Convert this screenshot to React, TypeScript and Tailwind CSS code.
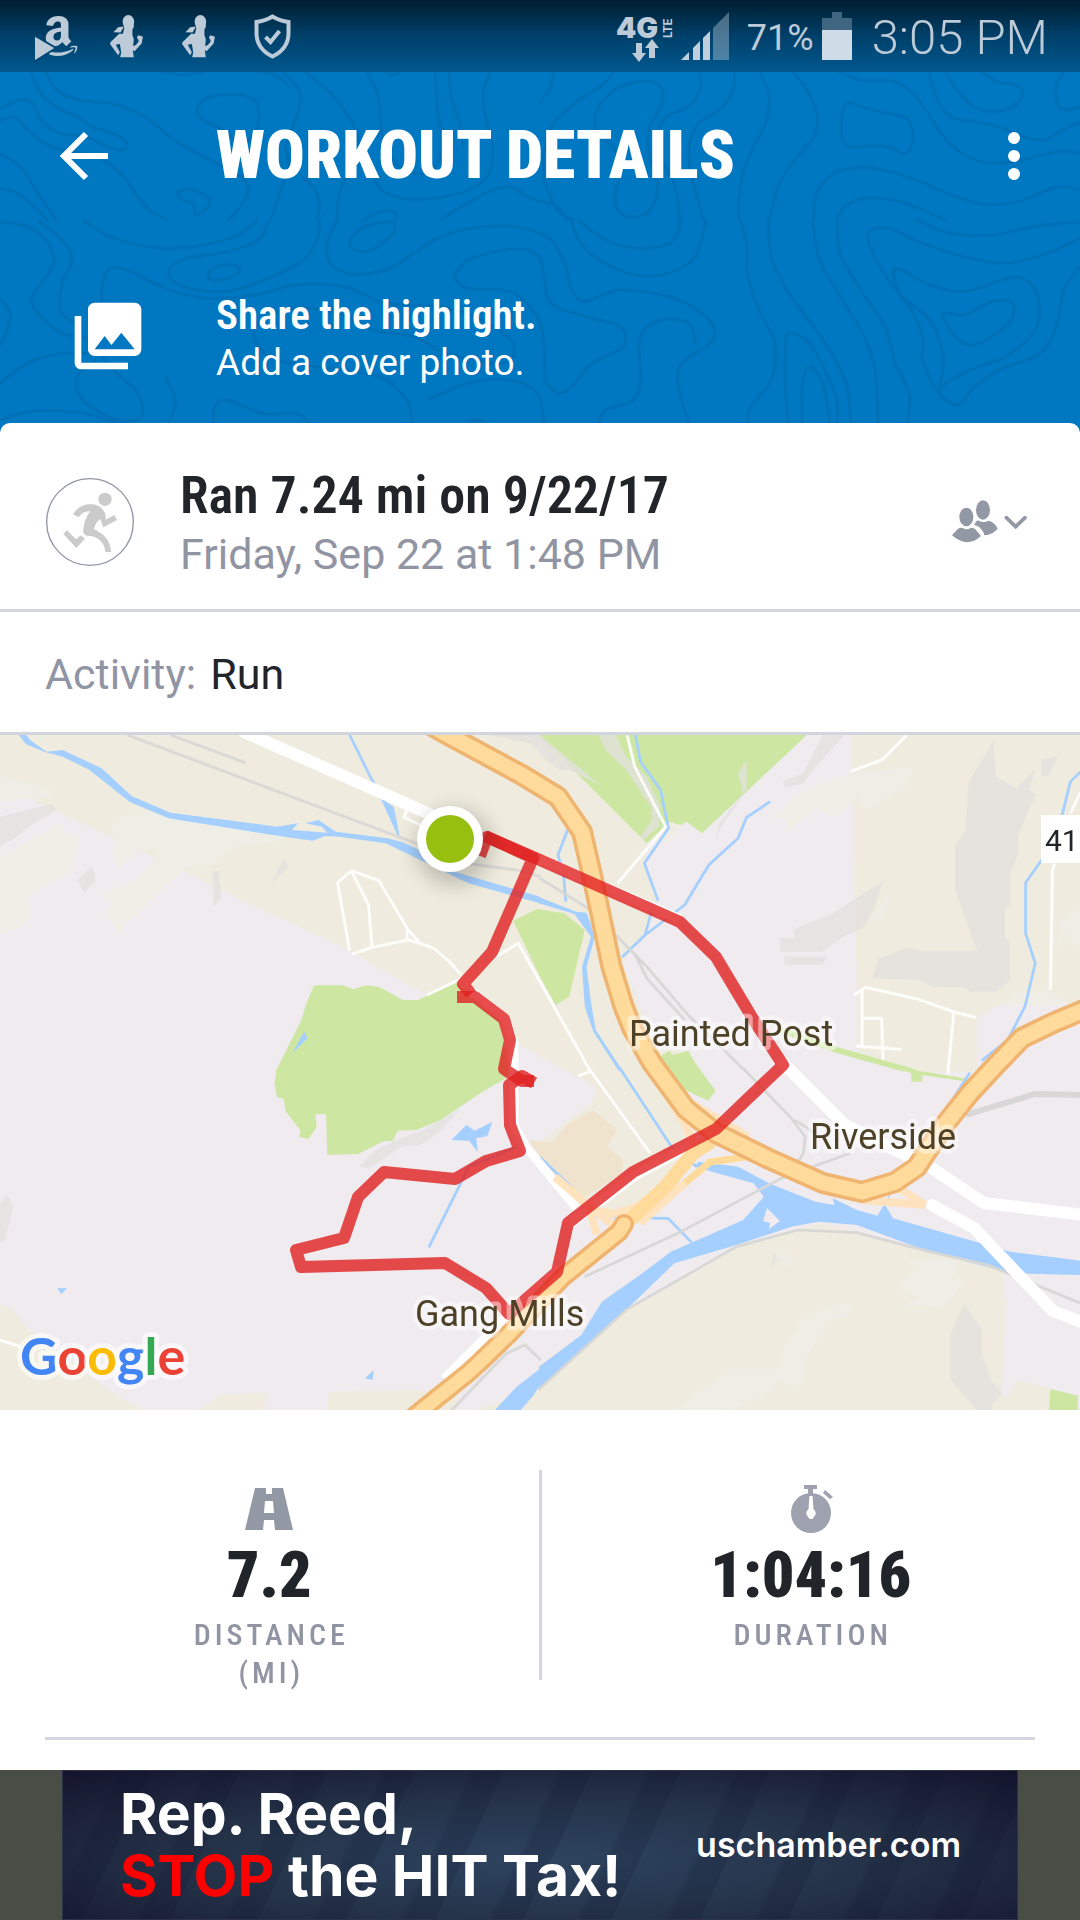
import React from "react";
import { FaAmazon } from "react-icons/fa";
import { MdPhotoLibrary } from "react-icons/md";

/* ---------- helpers ---------- */

// Turns "x,y x,y ..." into a smooth curve through every point.
function smooth(list: string, closed = false): string {
  const p = list
    .trim()
    .split(/\s+/)
    .map((s) => s.split(",").map(Number));
  const n = p.length;
  const at = (i: number) => (closed ? p[(i + n) % n] : p[Math.max(0, Math.min(n - 1, i))]);
  let d = `M${p[0][0]},${p[0][1]}`;
  const last = closed ? n : n - 1;
  for (let i = 0; i < last; i++) {
    const a = at(i - 1);
    const b = at(i);
    const c = at(i + 1);
    const e = at(i + 2);
    d += ` C${b[0] + (c[0] - a[0]) / 6},${b[1] + (c[1] - a[1]) / 6} ${c[0] - (e[0] - b[0]) / 6},${c[1] - (e[1] - b[1]) / 6} ${c[0]},${c[1]}`;
  }
  return closed ? d + "Z" : d;
}

/* ---------- header contour pattern ---------- */

const contourSets: { t: string; open: string[]; closed: string[] }[] = [
  {
    t: "translate(0 0) scale(.3444 .3333)",
    open: [
      "88,215 115,275 170,325 225,350 265,378 330,402 370,430 355,450 310,440 255,412 170,398 120,360 95,310 60,300 0,325",
      "133,215 165,270 230,300 330,312 420,350 520,430 640,495 705,535 722,575 690,630 660,665",
      "0,362 45,352 80,390 130,430 200,455 270,465 350,520 400,590 440,635 490,662",
      "0,462 60,500 110,580 165,662",
      "0,565 50,580 100,620 140,662",
      "820,215 865,265 872,310 850,380 830,440 840,500 815,570 800,620 785,662",
      "745,215 800,225 840,260",
      "885,215 950,270 1000,330 1035,400 1040,470 1000,540 982,600 978,662",
      "1065,215 1095,280 1105,350 1112,420 1150,490 1200,520 1260,505 1285,430 1270,330 1265,215",
      "1305,215 1310,290 1335,370 1345,440",
      "1425,215 1405,270 1410,350 1430,440 1420,520 1370,565 1290,590 1180,597 1110,570 1070,500 1055,420",
      "880,530 915,570 928,620 918,662",
      "1055,662 1100,635 1145,635 1150,662",
      "1275,662 1340,620 1420,575 1480,560 1530,590 1568,605",
      "470,216 530,224 595,216",
      "1120,216 1138,225 1165,216",
    ],
    closed: [
      "572,330 600,295 670,283 735,297 753,350 735,410 700,425 640,385 590,360",
      "518,575 555,568 600,590 608,615 570,645 563,615 530,600",
    ],
  },
  {
    t: "translate(540 0) scale(.3444 .3333)",
    open: [
      "42,215 30,260 0,310",
      "215,215 180,255 100,310 40,370 15,440 10,520 30,590 60,640 100,662",
      "465,215 465,270 430,320 370,350 340,400 350,470 385,540 400,600 405,662",
      "565,215 560,275 520,330 460,370 435,430 435,500 450,570 475,662",
      "640,215 665,290 655,370 620,440 590,520 578,600 578,662",
      "735,215 780,280 806,350 795,410 740,480 695,550 665,662",
      "865,215 930,240 1020,243 1080,275 1130,345 1180,420 1250,475 1330,490 1420,475 1500,455 1568,460",
      "1130,215 1150,290 1190,350 1250,363 1330,380 1400,410 1460,420 1510,395 1568,365",
      "1180,215 1210,270 1260,320 1310,335 1370,322 1402,280 1380,255 1330,245 1280,215",
      "1520,215 1498,260 1505,315 1530,330 1568,320",
      "795,662 800,590 840,530 900,505 980,507 1080,535 1180,580 1290,613 1390,605 1450,580 1510,560 1568,570",
      "860,662 885,620 940,595 1010,597 1100,625 1180,662",
      "0,602 50,620 80,662",
    ],
    closed: [
      "165,330 210,275 270,248 335,248 358,285 340,340 312,400 320,480 342,560 320,630 270,652 225,630 220,570 240,500 210,440 165,390",
      "880,330 895,308 930,320 1000,338 1060,352 1080,385 1078,440 1055,460 1010,440 950,438 895,440 875,400",
    ],
  },
  {
    t: "translate(0 220) scale(.6887 .3333)",
    open: [
      "0,5 40,20 70,70 78,130 60,190 45,240 60,290 90,340 130,360 160,440 200,520 205,590 170,600 120,540 112,470 140,420",
      "55,0 90,60 105,120 90,190 90,280 120,320",
      "120,0 160,50 220,82 280,80 340,50 375,0",
      "390,0 375,60 330,95 270,115 245,150 260,195 310,215 350,205 400,165 440,120 460,60 465,0",
      "490,0 475,70 480,130 510,162 560,150 600,100 640,50 700,20 760,25 800,60 820,130 830,210 850,245 900,210 980,235 1030,300 1035,360 990,430 985,500 1000,610",
      "150,290 148,200 160,145 190,155 240,205 300,235 370,225 430,195 500,200 560,250 640,260 700,300 745,370 730,430 650,400 600,350 540,330 490,280 430,265 380,300 370,360 400,420 460,440 550,470 590,540 598,610",
      "658,170 680,120 740,88 780,105 790,170 800,250 850,290 900,320 905,380 860,430 830,500 810,520 790,480",
      "658,170 680,205 740,215 780,290 790,380 790,480",
      "830,0 840,60 870,120 920,165 970,160 1010,110 1025,0",
      "840,0 880,60 930,85 975,65 990,0",
      "1075,0 1085,80 1085,160 1100,260 1125,370 1120,480 1090,560 1085,610",
      "1115,0 1120,110 1140,200 1170,290 1205,390 1230,500 1235,610",
      "1180,0 1190,120 1220,230 1250,330 1270,440 1275,610",
      "1215,0 1220,100 1250,210 1285,320 1300,430 1320,520 1318,610",
      "1145,610 1140,500 1140,400 1145,340 1175,370 1200,460 1215,540 1215,610",
      "1165,610 1165,500 1175,440 1195,490 1205,610",
      "1330,0 1380,40 1440,45 1500,20 1568,5",
      "1568,55 1520,100 1460,130 1400,110 1340,70 1290,25 1262,35 1265,90 1290,180 1320,260 1340,350 1340,420 1360,510 1390,555 1415,500 1450,450 1510,400 1535,310 1545,210 1568,140",
      "0,490 40,430 90,400 140,400",
      "0,600 50,572 120,580 170,610",
      "0,235 15,280 10,330 0,380",
      "310,610 312,560 330,540 380,580 430,580 450,610",
      "870,610 880,570 920,540 930,480 930,350 960,300 1000,310 1010,370",
      "620,540 680,490 740,480 780,520 790,610",
      "680,605 692,600 705,605",
      "240,470 255,540 245,610",
    ],
    closed: [
      "302,165 315,138 340,135 348,155 325,178 306,178",
      "508,60 530,20 570,5 570,40 540,90 515,90",
      "1297,160 1310,150 1350,195 1400,215 1440,190 1475,170 1500,200 1510,270 1500,340 1460,410 1420,440 1380,480 1365,500 1370,410 1350,300 1310,230",
      "1370,280 1400,285 1440,245 1470,250 1465,310 1415,375 1385,345",
    ],
  },
];

function Contours() {
  return (
    <svg
      className="absolute inset-0 h-full w-full"
      viewBox="0 0 1080 432"
      preserveAspectRatio="xMidYMin slice"
      fill="none"
      stroke="#0070b6"
      strokeWidth="3"
      aria-hidden="true"
    >
      {contourSets.map((s) => (
        <g key={s.t} transform={s.t}>
          {s.open.map((c) => (
            <path key={c} d={smooth(c)} vectorEffect="non-scaling-stroke" />
          ))}
          {s.closed.map((c) => (
            <path key={c} d={smooth(c, true)} vectorEffect="non-scaling-stroke" />
          ))}
        </g>
      ))}
    </svg>
  );
}

/* ---------- status bar ---------- */

function AthleteIcon() {
  return (
    <svg className="h-[44px] w-[34px]" viewBox="319 43 100 130" preserveAspectRatio="none" fill="#bccbd7" aria-hidden="true">
      <ellipse cx="373" cy="65" rx="17" ry="19" />
      <path d="M358 72L361 84L357 102H385V88L389 82V62z" />
      <path d="M329 97L343 82L360 80L357 86L350 98z" />
      <path d="M346 101H384L389 118L387 138L396 134L404 123L398 112L403 106L416 110L412 130L392 152L386 151L389 171H349L352 156L348 132L336 134L348 156L343 165L319 132L321 126z" />
    </svg>
  );
}

function ShieldIcon() {
  return (
    <svg className="h-[45px] w-[37px]" viewBox="0 0 37 45" fill="none" stroke="#bccbd7" strokeWidth="4" aria-hidden="true">
      <path d="M18.500 2.500Q11 7 2.500 8v12Q3 35 18.500 42.500 34 35 34.500 20V8Q26 7 18.500 2.500z" />
      <path d="M11.500 23l5 5 9-11" />
    </svg>
  );
}

function NetworkIcon() {
  return (
    <svg className="h-[60px] w-[66px] overflow-visible" viewBox="612 6 66 60" fill="#bccbd7" aria-hidden="true">
      <text x="617" y="38" fontFamily="Inter, sans-serif" fontWeight="900" fontSize="29">
        4G
      </text>
      <text x="-38" y="673" transform="rotate(-90)" fontFamily="Roboto, sans-serif" fontWeight="700" fontSize="12">
        LTE
      </text>
      <path d="M637 43h6v10h4l-7 9-7-9h4zM650 58v-10h-4l7-9 7 9h-4v10z" />
    </svg>
  );
}

function SignalIcon() {
  return (
    <svg className="h-[48px] w-[48px]" viewBox="681 12 48 48" fill="#bfd0dc" aria-hidden="true">
      <path d="M681 60l8-8v8zM693 48l7-7v19h-7zM703 38l7-7v29h-7z" />
      <path d="M713 28l16-16v48h-16z" fillOpacity=".4" />
    </svg>
  );
}

function BatteryIcon() {
  return (
    <svg className="h-[48px] w-[30px]" viewBox="823 11 30 48" aria-hidden="true">
      <path d="M833 11h10v6h10v12h-30V17h10z" fill="#3f6580" />
      <path d="M823 29h30v30h-30z" fill="#cddce7" />
    </svg>
  );
}

function StatusBar() {
  return (
    <div className="relative flex h-[72px] items-center justify-between bg-linear-to-b from-[#001e31] via-[#00406a] to-[#00588f] pr-[32px] pl-[34px] text-[#bccbd7]">
      <div className="flex items-center gap-[38px]">
        <div className="relative h-[52px] w-[38px]">
          <FaAmazon className="ml-1 h-[52px] w-[40px]" />
          <svg className="absolute bottom-0 left-0 h-[28px] w-[24px]" viewBox="0 0 24 28" aria-hidden="true">
            <path d="M0 1l22 13L0 28z" fill="#bccbd7" stroke="#004673" strokeWidth="2" />
          </svg>
        </div>
        <AthleteIcon />
        <AthleteIcon />
        <ShieldIcon />
      </div>
      <div className="flex items-center">
        <NetworkIcon />
        <span className="ml-1">
          <SignalIcon />
        </span>
        <span className="ml-[18px] pt-[3px] text-[36px] leading-[48px]">71%</span>
        <span className="ml-[8px]">
          <BatteryIcon />
        </span>
        <span className="ml-5 pt-[3px] text-[49px] leading-[56px] font-[350]">3:05 PM</span>
      </div>
    </div>
  );
}

/* ---------- header ---------- */

function Header() {
  return (
    <header className="relative bg-[#0077c1] text-white">
      <Contours />
      <StatusBar />
      <div className="relative flex h-[168px] items-center pr-[48px] pl-[60px]">
        <button type="button" aria-label="Back" className="w-[156px]">
          <svg className="h-[50px] w-[48px]" viewBox="0 0 48 50" fill="none" stroke="white" strokeWidth="6" aria-hidden="true">
            <path d="M26 3L4 25l22 22M4 25h44" />
          </svg>
        </button>
        <h1 className="font-['Roboto_Condensed','Roboto',sans-serif] text-[66px] leading-[72px] font-black">
          WORKOUT DETAILS
        </h1>
        <button type="button" aria-label="More options" className="ml-auto">
          <svg className="h-[48px] w-[36px]" viewBox="0 0 36 48" fill="white" aria-hidden="true">
            <circle cx="18" cy="6" r="6" />
            <circle cx="18" cy="24" r="6" />
            <circle cx="18" cy="42" r="6" />
          </svg>
        </button>
      </div>
      <button type="button" className="relative flex h-[192px] w-full items-center pl-[68px] text-left">
        <MdPhotoLibrary className="h-20 w-20" />
        <span className="ml-[68px] flex flex-col pt-[5px]">
          <span className="font-['Roboto_Condensed','Roboto',sans-serif] text-[41px] leading-[48px] font-semibold">
            Share the highlight.
          </span>
          <span className="text-[37px] leading-[48px]">Add a cover photo.</span>
        </span>
      </button>
    </header>
  );
}

/* ---------- workout summary ---------- */

function RunnerIcon() {
  return (
    <svg className="h-[90px] w-[90px] shrink-0" viewBox="47 52 270 270" aria-hidden="true">
      <circle cx="182" cy="187" r="130" fill="none" stroke="#9195a3" strokeWidth="4" />
      <g fill="#cbcbcb">
        <circle cx="227" cy="119" r="20" />
        <path d="M131 164q18-31 54-30 20 1 30 10 16 14 14 36l26-14 8 15-41 22-9-25q-15 10-19 30l14 8q34 18 38 61h-18q-2-27-22-40-14-10-34-9-13-3-10-20 3-28 20-53-22-2-34 18z" />
        <path d="M102 223l11-11 27 27 15-12 12 10-26 28z" />
      </g>
    </svg>
  );
}

function Summary() {
  return (
    <section className="flex h-[189px] items-center border-b-[3px] border-[#d3d5de] pt-[12px] pr-[52px] pl-[45px]">
      <RunnerIcon />
      <div className="ml-[45px] pt-[8px]">
        <h2 className="font-['Roboto_Condensed','Roboto',sans-serif] text-[52px] leading-[56px] font-semibold text-[#212529]">
          Ran 7.24 mi on 9/22/17
        </h2>
        <p className="text-[43px] leading-[60px] text-[#9195a3]">Friday, Sep 22 at 1:48 PM</p>
      </div>
      <button type="button" aria-label="Sharing: friends" className="ml-auto">
        <svg className="h-[44px] w-[76px]" viewBox="98 92 228 132" fill="#9398a5" aria-hidden="true">
          <ellipse cx="191" cy="122" rx="21" ry="29" />
          <ellipse cx="141" cy="143" rx="21" ry="28" />
          <path d="M98 198l18-20q8-5 14-2 12 8 24 0 8-2 14 4l17 20q-42 38-87-2zM164 166l10-13q18 10 34 1 18 4 27 24-14 18-40 20-6-26-31-32z" />
          <path d="M261 145l28 27 28-27" fill="none" stroke="#9398a5" strokeWidth="11" strokeLinecap="round" />
        </svg>
      </button>
    </section>
  );
}

/* ---------- map ---------- */

// The map is kept as four sheets; each holds one string of shapes per layer.
const NW = "translate(0 -5) scale(.3444 .3333)";
const NE = "translate(540 -5) scale(.3444 .3333)";
const SW = "translate(0 335) scale(.3444 .3333)";
const SE = "translate(540 335) scale(.3444 .3333)";

type Sheet = { t: string; d: string };

const land: Sheet[] = [
  {
    t: NW,
    d: "M0 0H1570V975L1505 945L1240 795L1100 715L1015 660L700 510L545 430L330 325L85 205L30 150L0 137z",
  },
  {
    t: NE,
    d: "M-4 0H775L470 310L425 275L345 330L310 350L300 400L345 510L300 610L240 700L340 960L430 960L470 1024H80L0 980H-4z M903 0H1570V825H1330L1268 865V1024H1085L925 985z",
  },
  {
    t: SW,
    d: "M0 705L35 715L80 775L230 890L300 950L360 990L420 1022H0zM575 1022L640 975L775 970L770 1022zM950 1022L955 965L1240 960L1330 930V1022z",
  },
  {
    t: SE,
    d: "M60 -5H340L400 100L470 250L360 340L270 410L150 435L0 290V215L150 100L165 50zM-200 1022L0 960L250 720L570 530L750 480L810 460L920 485L1130 545L1345 600V680L1355 690L1340 975L1358 980L1385 930L1480 955L1475 1022z",
  },
];

const parks: Sheet[] = [
  {
    t: NW,
    d: "M912 766H995L1025 778L1065 766L1100 770L1170 810H1213L1325 758L1370 800L1450 870L1480 1025H800L875 870L890 820z",
  },
  {
    t: NE,
    d: "M0 15H775L470 310L425 275L410 285L375 275L310 340L0 20zM-78 572L-8 537L70 550L130 600L85 800L45 825L0 740zM340 985L375 962L385 975L430 962L465 1024H355zM700 890L860 950L1080 1015L1100 1024H1050L850 965L700 910z",
  },
  {
    t: SW,
    d: "M803 -3H1480L1470 25L1400 65L1280 150L1210 180L1155 182L1140 213H1115L1040 252L950 255L947 133H915L920 170L895 208L868 200L873 182L830 125L823 85L805 83L797 40z",
  },
  { t: SE, d: "M350 -3H463L510 62L488 92L400 50zM1050 -2L1120 5L1250 28V36L1110 15V35H1078V10zM1482 957L1562 977V1022H1478z" },
];

const reliefDark: Sheet[] = [
  {
    t: NW,
    d: "M0 260L150 222L165 238L70 300L50 320L0 348zM225 450L268 408L278 452L245 488zM617 425L635 422L643 500L620 532zM790 460L822 384L838 410zM1420 15H1570V70L1540 40z",
  },
  {
    t: NE,
    d: "M170 15H220L250 80L310 140L350 230L345 290L300 330L290 320L325 270V235L250 120L190 60zM0 15L175 165L90 122L55 120L0 75zM820 15H885L800 110L765 160L712 175L705 155L765 130zM698 625H738V598L850 550L997 452L965 548L935 595L885 618L820 665H698zM710 680H835L818 705H710zM1245 155L1315 35L1325 140L1383 175L1437 120L1420 180L1440 192L1415 250L1388 320V375L1365 430V520L1350 540V620L1364 635V750L1325 785H1250L1230 772L1140 770L1100 750L965 745L985 685L1070 652L1105 663H1270L1205 480V350L1235 300zM1455 90L1503 77L1480 135L1455 140zM575 130L600 90V180L520 300L505 350L520 280L590 190z",
  },
  {
    t: SW,
    d: "M1042 290L1090 240L1150 210L1230 180L1340 115L1270 190L1220 225L1170 228L1070 295zM0 400L22 375L38 410L15 510L0 518z",
  },
  { t: SE, d: "M1192 790L1232 700L1284 780V850L1310 930L1342 970L1312 1005V1022H1270L1192 930zM667 595L680 545L690 570z" },
];

const reliefLight: Sheet[] = [
  {
    t: NW,
    d: "M0 140L150 180L145 200L0 215zM320 300L350 260L440 245L820 300V335L700 345L640 380L615 405L540 410L340 610L305 550L330 520L290 495L400 445L460 380L460 355L400 360L345 415L330 380L335 330zM0 385L180 275V310L228 315L210 420L80 500L90 550L75 585L0 615z",
  },
  {
    t: NE,
    d: "M740 200L810 160L900 130L1085 112L1070 165L950 240L920 200L860 265L800 235L715 310V270L670 265zM380 285L415 240L410 300L380 340L340 330zM955 570L1015 495L995 570zM1500 660L1510 570L1570 530V660L1525 610zM1330 825L1400 785L1475 780L1540 825z",
  },
  {
    t: SE,
    d: "M385 1022L555 897H700L710 830L765 745L830 712L910 700L890 745L850 745L770 860V930L740 955L690 925L680 960L550 1022zM665 585L705 530L740 585L715 585L695 560zM1042 660L1060 625L1090 600L1070 572L1210 570V620L1230 635L1170 715L1100 705L1040 720L1100 680z",
  },
];

const water: Sheet[] = [
  {
    t: NW,
    d: "M55 15H75L90 32L135 65L182 60L295 115L382 198L495 248L805 290L865 280L848 300L950 308L935 290L887 280L925 270L975 305L1125 325L1165 335L1230 365L1320 425L1568 500V520L1360 460L1220 390L1120 340L985 320L945 318L908 332L835 322L490 265L378 217L260 120L182 80L130 66L75 42zM1105 205L1143 230L1160 315L1155 318L1125 250zM848 970L883 905L893 925z",
  },
  {
    t: NE,
    d: "M-4 501L105 545L135 548L150 590L158 625L135 712L150 830L162 900L240 1022H228L155 905L130 830L122 710L148 620L100 552L-4 520z",
  },
  {
    t: SW,
    d: "M1311 210L1354 165L1378 182L1430 155L1415 198L1383 205L1387 245L1362 212zM166 655H195L178 672zM1060 925L1085 900L1082 930zM1570 895L1500 950L1435 1022H1510L1550 975L1570 940z",
  },
  {
    t: SE,
    d: "M-3 890L120 795L180 695L290 615L380 545L590 450L650 380L620 340L500 305L450 290L460 275L575 290L665 340L800 395L855 405L850 385L920 420L980 437L1020 365L1005 410L1025 445L1280 520L1365 545L1570 572V615L1370 610L1130 545L920 465L810 455L730 470L570 525L390 580L270 700L150 815L-3 955zM648 455L658 415L697 452L665 478L668 458z",
  },
];

const streams: Sheet[] = [
  { t: NW, d: "M1015 15L1080 150L1120 220" },
  {
    t: NE,
    d: "M277 15L292 95L350 180L373 295L303 400L343 512M325 540L305 615M238 682L305 615L420 525L490 405L575 325L600 262L668 215M80 300L52 375L68 430L75 515M1570 125L1540 155L1515 260M1460 385L1410 458V610L1438 700L1408 830L1358 930L1283 992",
  },
  { t: SW, d: "M1245 532L1340 335L1360 290L1500 230" },
  { t: SE, d: "M232 -5L385 235L455 290M0 262L90 350M155 437L250 443L372 445L440 517M1248 8L1160 150" },
];

const rails: Sheet[] = [
  { t: NW, d: "M370 15L860 205L1220 345L1320 395L1500 420L1570 440M495 15L712 98" },
  { t: NE, d: "M0 445L140 535L220 615L310 710L430 855L595 1022M275 670L310 745L420 870" },
  {
    t: SE,
    d: "M590 -5L730 145L770 200L765 250L740 290M740 150L800 190M-5 960L250 720L570 530L750 480L920 488L1130 545L1300 585L1570 700M130 620L400 490L700 325L900 250",
  },
  { t: SW, d: "M1310 1022L1470 850L1525 825L1570 870" },
];

const roads: Sheet[] = [
  {
    t: NW,
    d: "M1020 422L980 458L1015 662M1020 422L1100 452L1185 600L1220 640L1260 655L1300 690L1340 735M1020 422L1070 525L1080 652M1022 672L1080 652L1185 630L1220 640M1182 600V630M1240 795L1340 745M1185 230L1173 262L1220 285M1440 680L1505 640L1570 760",
  },
  {
    t: NE,
    d: "M253 15L275 110L365 290L225 460M0 755L145 1022M1065 15L995 88L900 125M912 795L945 772L1100 808L1200 845L1265 862M935 780V950M935 865H992L996 990M918 948L1050 958M1202 845L1185 1022M1570 185L1540 250M1495 400L1488 420L1482 780",
  },
  { t: SE, d: "M145 0L320 250M110 18L145 5M1185 -3V12" },
  { t: SW, d: "M0 810L60 830" },
];

function Layer({ sheets, fill, stroke, width }: { sheets: Sheet[]; fill?: string; stroke?: string; width?: number }) {
  return (
    <g fill={fill ?? "none"} stroke={stroke} strokeWidth={width} strokeLinejoin="round">
      {sheets.map((s) => (
        <path key={s.d} d={s.d} transform={s.t} />
      ))}
    </g>
  );
}

const motorways = [
  {
    d: "M432 -9L448 0L522 40L558 62L582 97L592 140L600 177L611 230L623 270L632 293L652 328L686 374L716 398L769 424L823 448L862 457L895 447L917 432L926 418L946 388L970 358L996 330L1022 303L1053 288L1084 275",
    w: 22,
  },
  { d: "M410 685L422 675L468 638L480 627L510 598L563 542L619 497L624 489", w: 20 },
];

const places = [
  { name: "Painted Post", x: 629, y: 311 },
  { name: "Riverside", x: 810, y: 414 },
  { name: "Gang Mills", x: 415, y: 591 },
];

function RouteMap() {
  return (
    <svg className="block h-auto w-full bg-[#efebef]" viewBox="0 0 1080 675" role="img" aria-label="Route map">
      <Layer sheets={land} fill="#efebde" />
      <path d="M528 405L552 408L567 390L593 375L617 395L607 412L623 425L622 438L580 465L565 455z" fill="#f0e3ce" />
      <Layer sheets={reliefLight} fill="#eeeee7" />
      <Layer sheets={parks} fill="#cde7a3" />
      <g opacity=".75">
        <Layer sheets={reliefDark} fill="#e3e1df" />
      </g>
      <Layer sheets={water} fill="#a4cffe" />
      <path d="M763 486L767 473L780 486L769 494L770 488z" fill="#efebef" />
      <Layer sheets={streams} stroke="#a4cffe" width={8} />
      <Layer sheets={rails} stroke="#d7d7d6" width={8} />
      <path d="M966 380L1035 359L1084 360" fill="none" stroke="#d7d7d6" strokeWidth="6" />
      <Layer sheets={roads} stroke="#ffffff" width={8} />
      <g fill="none" stroke="#ffffff" strokeWidth="12" strokeLinejoin="round">
        <path d="M244 -3L450 88M783 328L845 390L930 432L984 468L1084 480M932 470L974 493L1053 576L1084 588" strokeLinecap="round" />
        <path d="M470 255L505 283L514 308V390L526 412L578 475" strokeWidth="9" />
        <path d="M570 489L636 440L716 397M540 124L680 184" strokeWidth="10" />
        <path d="M445 645L505 585L560 535" />
      </g>
      <g fill="none" stroke="#ffe3be" strokeWidth="8">
        <path d="M555 442L593 475L613 479L637 472L664 452M590 476L597 500M596 476L615 492M664 355L686 390L696 415M686 365L748 402M640 488L685 448M862 465L925 470L897 452" />
      </g>
      <path d="M630 485L667 450L693 418L712 406" fill="none" stroke="#ffdb9b" strokeWidth="14" />
      <path d="M685 448L710 427L745 422" fill="none" stroke="#ffdb9b" strokeWidth="7" />
      {motorways.map((m) => (
        <g key={m.d} fill="none" strokeLinejoin="round" strokeLinecap="round">
          <path d={m.d} stroke="#efb470" strokeWidth={m.w} />
          <path d={m.d} stroke="#ffdb9b" strokeWidth={m.w - 7} />
        </g>
      ))}

      <g fill="none" stroke="#e12020" strokeOpacity=".8" strokeWidth="12" strokeLinejoin="round">
        <path d="M480 121L487 102L540 125L680 187L716 222L753 284L783 330L716 394L633 437L568 488L557 537L509 579L486 553L445 528L301 532L296 515L344 503L358 462L384 437L455 444L486 426L520 416L510 390L509 350L522 341L534 348" />
        <path d="M485 101L533 123L492 217L463 249L471 259" />
        <path d="M457 262L475 262L504 284L510 305L504 334L522 346L534 346" />
      </g>

      <g fontFamily="Roboto, sans-serif" fontSize="36" fill="#4d4228" stroke="#ffffff" strokeOpacity=".45" strokeWidth="9" strokeLinejoin="round" paintOrder="stroke">
        {places.map((p) => (
          <text key={p.name} x={p.x} y={p.y}>
            {p.name}
          </text>
        ))}
      </g>

      <rect x="1041" y="80" width="39" height="48" fill="#ffffff" />
      <text x="1045" y="116" fontFamily="Roboto, sans-serif" fontSize="30" fill="#212529">
        41
      </text>

      <circle cx="454" cy="112" r="38" fill="#000000" className="opacity-20 blur-[10px]" />
      <circle cx="450" cy="104" r="33" fill="#ffffff" />
      <circle cx="450" cy="104" r="24" fill="#97bf0f" />

      <text x="20" y="640" fontFamily="Lato, sans-serif" fontSize="52" fontWeight="700" stroke="#ffffff" strokeOpacity=".6" strokeWidth="10" strokeLinejoin="round" paintOrder="stroke">
        <tspan fill="#4285f4">G</tspan>
        <tspan fill="#ea4335">o</tspan>
        <tspan fill="#fbbc05">o</tspan>
        <tspan fill="#4285f4">g</tspan>
        <tspan fill="#34a853">l</tspan>
        <tspan fill="#ea4335">e</tspan>
      </text>
    </svg>
  );
}

/* ---------- statistics ---------- */

function RoadIcon() {
  return (
    <svg className="h-[42px] w-[48px]" viewBox="0 0 48 42" aria-hidden="true">
      <path fill="#9398a5" fillRule="evenodd" d="M10 0h11v6h6V0h11l10 42H30l-1-10H19l-1 10H0zM20 13l-1 12h10l-1-12z" />
    </svg>
  );
}

function StopwatchIcon() {
  return (
    <svg className="h-[48px] w-[48px]" viewBox="0 0 48 48" aria-hidden="true">
      <g fill="#9da2ae">
        <circle cx="24" cy="28" r="20" />
        <path d="M17 0h13v4h-4v6h-5V4h-4zM38 5l8 7-3 2-7-6z" />
      </g>
      <path d="M22.500 11h3l1 13q4 4 1 7l-2 3h-3l-2-3q-3-3 1-7z" fill="white" />
    </svg>
  );
}

function Stat({ icon, value, label }: { icon: React.ReactNode; value: string; label: string }) {
  return (
    <div className="flex flex-1 flex-col items-center pt-[4px] font-['Roboto_Condensed','Roboto',sans-serif]">
      <div className="flex h-[70px] items-center">{icon}</div>
      <strong className="text-[64px] leading-[64px] font-black text-[#212529]">{value}</strong>
      <span className="mt-[8px] w-[190px] pl-[4px] text-center text-[30px] leading-[38px] font-medium tracking-[4px] text-[#9195a3]">
        {label}
      </span>
    </div>
  );
}

function Stats() {
  return (
    <section className="flex flex-col">
      <div className="flex pt-[60px] pb-[45px]">
        <Stat icon={<RoadIcon />} value="7.2" label="DISTANCE (MI)" />
        <div className="h-[210px] w-[3px] bg-[#d5d6e0]" />
        <Stat icon={<StopwatchIcon />} value="1:04:16" label="DURATION" />
      </div>
      <hr className="mx-[45px] border-t-[3px] border-[#d5d6e0]" />
    </section>
  );
}

/* ---------- advertisement ---------- */

function AdBanner() {
  return (
    <footer className="mt-auto flex h-[150px] justify-center bg-[#484d46]">
      <a
        href="#uschamber"
        className="relative flex w-[956px] items-center justify-between overflow-hidden border border-[#2b3146] bg-[radial-gradient(ellipse_at_50%_60%,#2e4460_0%,#243248_50%,#14142c_100%)] pr-[56px] pl-[57px] font-['Inter',sans-serif] text-white"
      >
        <span className="absolute inset-0 bg-[repeating-linear-gradient(115deg,transparent_0px,transparent_48px,rgba(10,15,40,0.16)_54px,rgba(10,15,40,0.16)_80px)]" />
        <span className="relative text-[57px] leading-[62px] font-bold">
          Rep. Reed,
          <br />
          <span className="text-[#ff0000]">STOP</span> the HIT Tax!
        </span>
        <span className="relative text-[34px] leading-[48px] font-semibold">uschamber.com</span>
      </a>
    </footer>
  );
}

export default function App() {
  return (
    <div className="flex min-h-screen flex-col bg-white font-['Roboto',sans-serif]">
      <Header />
      <main className="relative -mt-[9px] rounded-t-[10px] bg-white">
        <Summary />
        <dl className="flex h-[123px] items-center gap-[14px] border-b-[3px] border-[#d3d5de] px-[45px] pt-[4px] text-[43px] leading-[56px]">
          <dt className="text-[#9195a3]">Activity:</dt>
          <dd className="text-[#212529]">Run</dd>
        </dl>
        <RouteMap />
        <Stats />
      </main>
      <AdBanner />
    </div>
  );
}
